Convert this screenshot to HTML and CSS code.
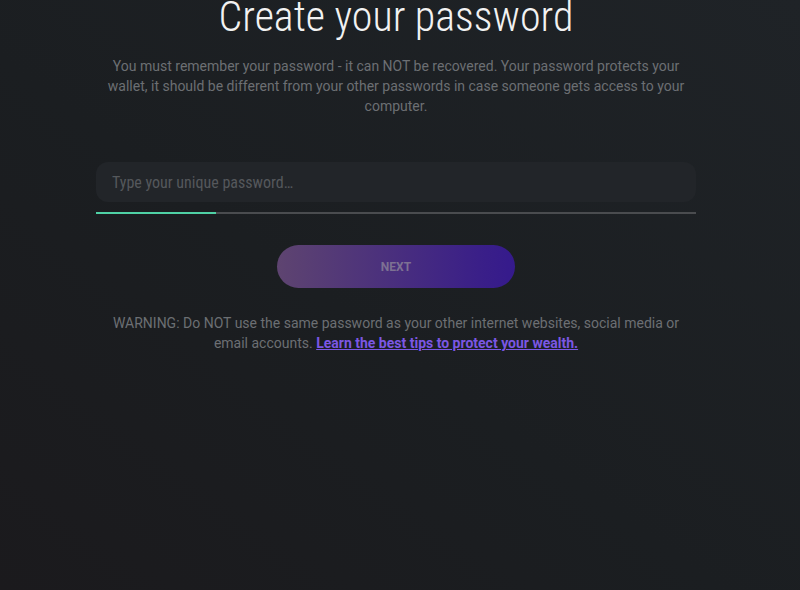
FILE: index.html
```html
<!DOCTYPE html>
<html lang="en">
<head>
<meta charset="utf-8">
<title>Create your password</title>
<link rel="stylesheet" href="styles.css">
</head>
<body>
<main class="page">
  <section class="card">
    <h1 class="title">Create your password</h1>
    <p class="intro">You must remember your password - it can NOT be recovered. Your password protects your wallet, it should be different from your other passwords in case someone gets access to your computer.</p>
    <div class="field">
      <input class="input" type="password" placeholder="Type your unique password…">
      <div class="meter"><div class="meter-fill" style="width:20%"></div></div>
    </div>
    <button class="next" type="button">NEXT</button>
    <p class="warning">WARNING: Do NOT use the same password as your other internet websites, social media or email accounts. <a class="link" href="#">Learn the best tips to protect your wealth.</a></p>
  </section>
</main>
</body>
</html>
```
FILE: styles.css
```css
* { box-sizing: border-box; }
html, body { height: 100%; }
body {
  margin: 0;
  font-family: Roboto, "Liberation Sans", sans-serif;
  background: linear-gradient(to top right, #1b1a1d 0%, #1b1e21 45%, #1f2327 100%);
  color: #6c6f73;
  overflow: hidden;
}
.page {
  display: flex;
  justify-content: center;
  padding-right: 8px;
}
.card {
  width: 600px;
  display: flex;
  flex-direction: column;
  align-items: center;
}
.title {
  margin: -9px 0 0;
  font-weight: 300;
  font-size: 42px;
  font-stretch: 85%;
  line-height: 52px;
  color: #f2f2f2;
}
.intro {
  margin: 13px 0 0;
  font-size: 14px;
  line-height: 20px;
  text-align: center;
  color: #6c6f73;
}
.field {
  width: 100%;
  margin-top: 46px;
}
.input {
  display: block;
  width: 100%;
  height: 40px;
  border: 0;
  border-radius: 12px;
  background: #222529;
  padding: 0 16px;
  font-family: Roboto, sans-serif;
  font-size: 16px;
  font-stretch: 82%;
  color: #ddd;
  outline: none;
}
.input::placeholder { color: #55585c; }
.meter {
  margin-top: 10px;
  height: 2px;
  background: #4a4c4f;
}
.meter-fill {
  height: 100%;
  background: #4fd1a5;
}
.next {
  margin-top: 31px;
  width: 238px;
  height: 43px;
  border: 0;
  border-radius: 22px;
  background: linear-gradient(to right, #5e4470, #3a1f88 85%, #351a8c);
  color: #7d7193;
  font-family: Roboto, sans-serif;
  font-weight: 700;
  font-size: 12px;
}
.warning {
  margin: 25px 0 0;
  font-size: 14px;
  line-height: 20px;
  text-align: center;
  color: #6c6f73;
}
.link {
  color: #7b57e4;
  font-weight: 700;
  text-decoration: underline;
}
```
